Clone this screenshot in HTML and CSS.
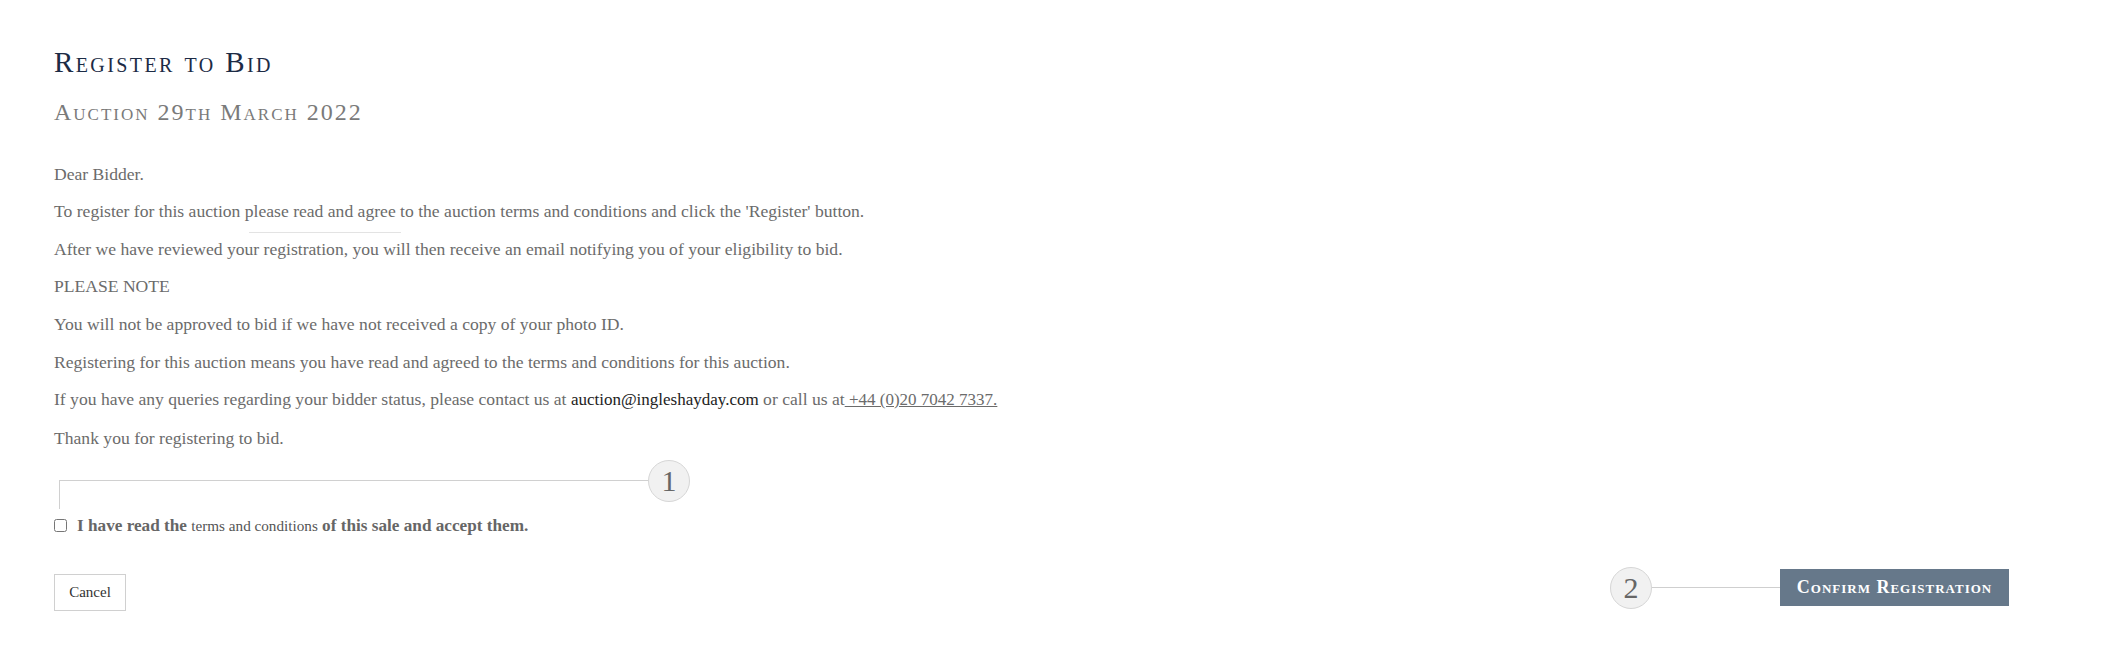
FILE: index.html
```html
<!DOCTYPE html>
<html lang="en">
<head>
  <meta charset="UTF-8">
  <title>Register to Bid</title>
  <link rel="stylesheet" href="styles.css">
</head>
<body>

  <div class="page">
    <h1 class="title">Register to Bid</h1>
    <h2 class="subtitle">Auction 29th March 2022</h2>

    <div class="letter">
      <span class="hint-line"></span>
      <p>Dear Bidder.</p>
      <p>To register for this auction please read and agree to the auction terms and conditions and click the 'Register' button.</p>
      <p>After we have reviewed your registration, you will then receive an email notifying you of your eligibility to bid.</p>
      <p>PLEASE NOTE</p>
      <p>You will not be approved to bid if we have not received a copy of your photo ID.</p>
      <p>Registering for this auction means you have read and agreed to the terms and conditions for this auction.</p>
      <p>If you have any queries regarding your bidder status, please contact us at <a class="email" href="#">auction@ingleshayday.com</a> or call us at<a class="phone" href="#"> +44 (0)20 7042 7337.</a></p>
      <p>Thank you for registering to bid.</p>
    </div>

    <div class="step-line">
      <span class="step-num step-one">1</span>
    </div>

    <div class="accept">
      <input type="checkbox" id="acceptTerms">
      <label for="acceptTerms">I have read the <span class="terms">terms and conditions</span> of this sale and accept them.</label>
    </div>

    <div class="actions">
      <button class="btn-cancel">Cancel</button>
      <div class="confirm-group">
        <span class="step-num">2</span>
        <span class="connector"></span>
        <button class="btn-confirm">Confirm Registration</button>
      </div>
    </div>
  </div>

</body>
</html>
```

FILE: styles.css
```css
body {
  margin: 0;
  background: #fff;
  font-family: "Liberation Serif", "Times New Roman", serif;
  color: #6b6b6b;
}

.page {
  padding: 45px 99px 40px 54px;
}

.title {
  margin: 0;
  font-size: 29px;
  line-height: 1.2;
  font-weight: normal;
  font-variant: small-caps;
  letter-spacing: 2.4px;
  color: #1c2b45;
}

.subtitle {
  margin: 18px 0 0;
  font-size: 24px;
  line-height: 1.2;
  font-weight: normal;
  font-variant: small-caps;
  letter-spacing: 2px;
  color: #7a7a7a;
}

.letter {
  position: relative;
  margin-top: 34px;
}

.letter p {
  margin: 0 0 11.6px;
  font-size: 17.6px;
  line-height: 26px;
}

.letter p:last-child {
  margin-bottom: 0;
}

.hint-line {
  position: absolute;
  left: 195px;
  top: 71px;
  width: 152px;
  border-top: 1px solid #e3e3e3;
}

.email {
  color: #222;
  font-size: 17px;
  text-decoration: none;
}

.phone {
  color: #6b6b6b;
  font-size: 17px;
  text-decoration: underline;
}

.step-line {
  position: relative;
  margin: 29px 0 0 5px;
  width: 609px;
  height: 28px;
  border-top: 1px solid #d0d0d0;
  border-left: 1px solid #d0d0d0;
}

.step-num {
  width: 40px;
  height: 40px;
  border: 1px solid #d6d6d6;
  border-radius: 50%;
  background: #f1f1f1;
  color: #666;
  font-size: 30px;
  line-height: 40px;
  text-align: center;
  flex-shrink: 0;
}

.step-one {
  position: absolute;
  right: -21px;
  top: -21px;
}

.accept {
  display: flex;
  align-items: center;
  margin-top: 4px;
  font-size: 17.2px;
  line-height: 26px;
}

.accept input {
  margin: 0 10px 0 0;
  width: 13px;
  height: 13px;
}

.accept label {
  font-weight: bold;
  color: #666;
}

.terms {
  font-weight: normal;
  font-size: 15.2px;
  color: #555;
}

.actions {
  display: flex;
  justify-content: space-between;
  align-items: flex-start;
  margin-top: 28px;
}

.btn-cancel {
  margin-top: 7px;
  width: 72px;
  height: 37px;
  padding: 0;
  border: 1px solid #d0d0d0;
  background: #fff;
  font-family: "Liberation Serif", "Times New Roman", serif;
  font-size: 15px;
  color: #333;
  cursor: pointer;
}

.confirm-group {
  display: flex;
  align-items: center;
}

.connector {
  width: 128px;
  border-top: 1px solid #cfcfcf;
}

.btn-confirm {
  width: 229px;
  height: 37px;
  padding: 0;
  border: none;
  background: #66788a;
  color: #fff;
  font-family: "Liberation Serif", "Times New Roman", serif;
  font-size: 18px;
  font-weight: bold;
  font-variant: small-caps;
  letter-spacing: 1px;
  cursor: pointer;
}
```
